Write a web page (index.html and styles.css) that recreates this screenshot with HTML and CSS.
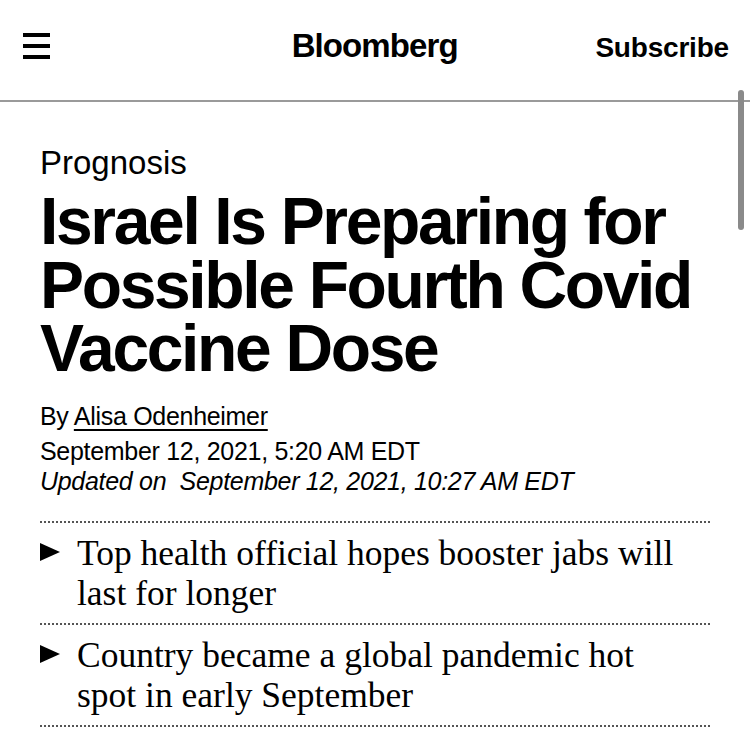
FILE: index.html
```html
<!DOCTYPE html>
<html>
<head>
<meta charset="utf-8">
<link rel="stylesheet" href="styles.css">
</head>
<body>
<header class="topbar">
  <div class="menu" aria-label="menu">
    <span></span><span></span><span></span>
  </div>
  <div class="logo">Bloomberg</div>
  <div class="subscribe">Subscribe</div>
</header>
<div class="scrollbar"></div>
<main class="article">
  <div class="kicker">Prognosis</div>
  <h1 class="headline">Israel Is Preparing for Possible Fourth Covid Vaccine Dose</h1>
  <div class="byline">By <a class="author">Alisa Odenheimer</a></div>
  <div class="date">September 12, 2021, 5:20 AM EDT</div>
  <div class="updated">Updated on &nbsp;September 12, 2021, 10:27 AM EDT</div>
  <ul class="abstract">
    <li><span class="tri"></span><span class="txt">Top health official hopes booster jabs will last for longer</span></li>
    <li><span class="tri"></span><span class="txt">Country became a global pandemic hot spot in early September</span></li>
  </ul>
</main>
</body>
</html>
```
FILE: styles.css
```css
html, body {
  margin: 0;
  padding: 0;
  background: #fff;
  color: #000;
  font-family: "Liberation Sans", Arial, sans-serif;
}
body {
  width: 750px;
  height: 732px;
  overflow: hidden;
  position: relative;
}
.topbar {
  height: 100px;
  border-bottom: 2px solid #9a9a9a;
  display: flex;
  align-items: center;
  justify-content: space-between;
  padding: 0 21px 0 23px;
  box-sizing: content-box;
}
.menu {
  width: 27px;
  display: flex;
  flex-direction: column;
  gap: 7px;
  margin-top: -8px;
}
.menu span {
  display: block;
  height: 4px;
  background: #000;
}
.logo {
  font-weight: bold;
  font-size: 33px;
  letter-spacing: -0.9px;
  margin-left: 104px;
  margin-top: -8px;
}
.subscribe {
  font-weight: bold;
  font-size: 28px;
  letter-spacing: -0.2px;
  margin-top: -4px;
}
.scrollbar {
  position: absolute;
  right: 6px;
  top: 90px;
  width: 6px;
  height: 140px;
  border-radius: 3px;
  background: #8a8a8a;
}
.article {
  padding: 0 40px;
}
.kicker {
  font-size: 33px;
  margin-top: 43px;
  line-height: 36px;
  letter-spacing: 0;
}
.headline {
  font-size: 66px;
  line-height: 63.5px;
  font-weight: bold;
  letter-spacing: -2.35px;
  margin: 9px 0 0;
  width: 690px;
}
.byline, .date, .updated {
  font-size: 25px;
  line-height: 30px;
  letter-spacing: -0.3px;
}
.byline {
  margin-top: 20px;
}
.author {
  color: #000;
  text-decoration: underline;
  text-decoration-thickness: 1.5px;
  text-underline-offset: 4px;
}
.date { margin-top: 5px; }
.updated { font-style: italic; }
.abstract {
  list-style: none;
  margin: 25px 0 0;
  padding: 0;
  width: 670px;
  border-top: 2px dotted #555;
}
.abstract li {
  display: flex;
  align-items: flex-start;
  border-bottom: 2px dotted #555;
  padding: 10px 0 10px;
}
.tri {
  width: 0;
  height: 0;
  border-top: 9px solid transparent;
  border-bottom: 9px solid transparent;
  border-left: 20px solid #000;
  margin-top: 10px;
  margin-right: 17px;
  flex: none;
}
.txt {
  font-family: "Liberation Serif", "Times New Roman", serif;
  font-size: 35.5px;
  line-height: 40px;
  max-width: 605px;
}
```
